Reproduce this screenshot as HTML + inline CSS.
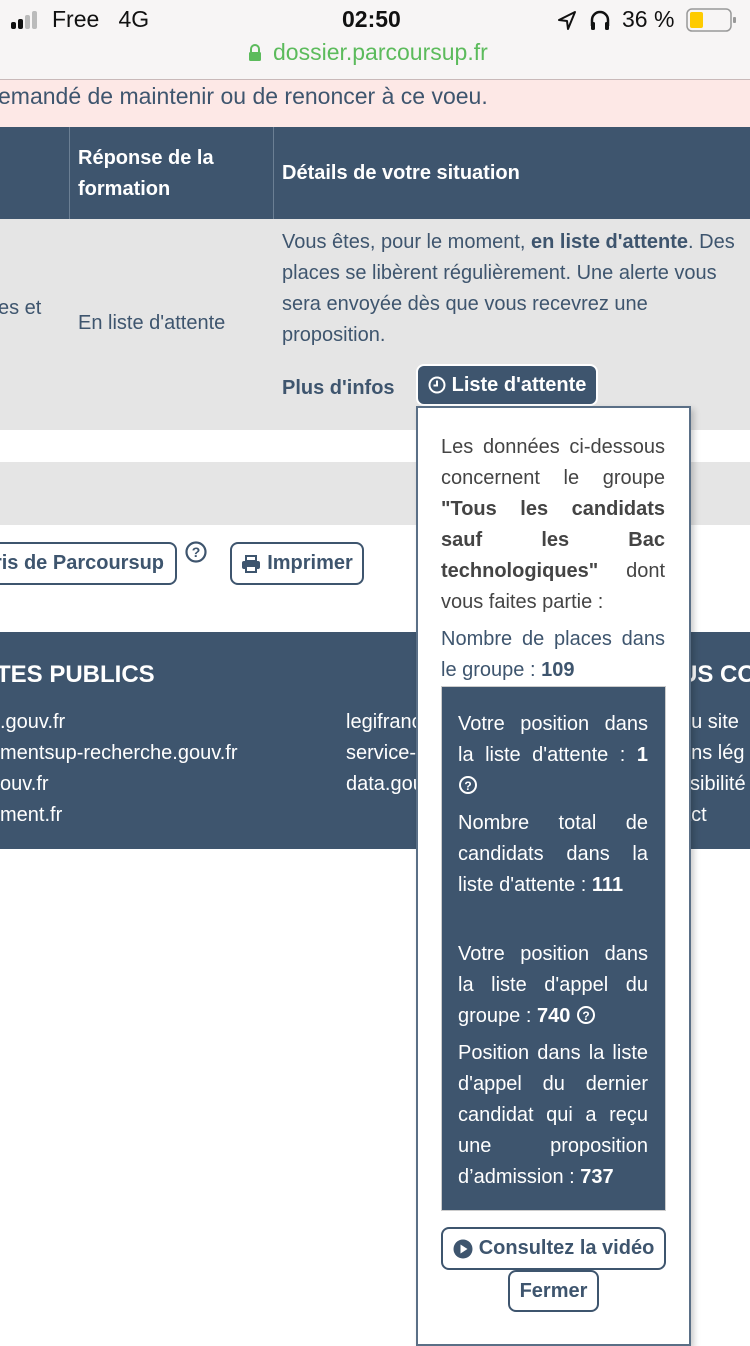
<!DOCTYPE html>
<html><head><meta charset="utf-8"><style>
*{margin:0;padding:0;box-sizing:border-box}
body{width:750px;height:1334px;overflow:hidden;position:relative;background:#fff;font-family:"Liberation Sans",sans-serif;font-size:20px;color:#3e556e}
.a{position:absolute;white-space:nowrap}
.b{font-weight:bold}
.btn{position:absolute;border:2px solid #3e556e;border-radius:8px;background:#fff;font-weight:bold;color:#3e556e;display:flex;align-items:center;justify-content:center;gap:6px}
.l{display:block;height:31px;line-height:31px;text-align:justify;text-align-last:justify;white-space:nowrap}
.e{text-align-last:left}
</style></head><body>
<div class="a" style="left:0;top:0;width:750px;height:80px;background:#f7f5f5;border-bottom:1px solid #c9b9b9"></div>
<svg class="a" style="left:11px;top:10px" width="36" height="20"><rect x="0" y="12" width="5" height="7" rx="2" fill="#111"/><rect x="7" y="9" width="5" height="10" rx="2" fill="#111"/><rect x="14" y="5" width="5" height="14" rx="2" fill="#bbb"/><rect x="21" y="1" width="5" height="18" rx="2" fill="#bbb"/></svg>
<div class="a" style="left:52px;top:6px;font-size:23px;color:#111">Free&nbsp;&nbsp;&nbsp;4G</div>
<div class="a b" style="left:342px;top:6px;font-size:23px;color:#111">02:50</div>
<svg class="a" style="left:556px;top:10px" width="22" height="22"><path d="M19 2 L3 10 L11 11 L12 19 Z" fill="none" stroke="#111" stroke-width="2" stroke-linejoin="round"/></svg>
<svg class="a" style="left:588px;top:8px" width="24" height="24"><path d="M4 18 V12 A8 8 0 0 1 20 12 V18" fill="none" stroke="#111" stroke-width="2.5"/><rect x="3" y="14" width="4" height="8" rx="1.5" fill="#111"/><rect x="17" y="14" width="4" height="8" rx="1.5" fill="#111"/></svg>
<div class="a" style="left:622px;top:6px;font-size:23px;color:#111">36 %</div>
<svg class="a" style="left:686px;top:8px" width="52" height="26"><rect x="1" y="1" width="44" height="22" rx="5" fill="none" stroke="#999" stroke-width="1.5"/><rect x="4" y="4" width="13" height="16" rx="2" fill="#fecb00"/><rect x="47" y="9" width="3" height="6" rx="1" fill="#999"/></svg>
<svg class="a" style="left:248px;top:44px" width="14" height="18"><path d="M3 8 V5 A4 4 0 0 1 11 5 V8" fill="none" stroke="#5cbb5c" stroke-width="2"/><rect x="1" y="8" width="12" height="9" rx="1.5" fill="#5cbb5c"/></svg>
<div class="a" style="left:273px;top:39px;font-size:23px;color:#5cbb5c">dossier.parcoursup.fr</div>
<div class="a" style="left:0;top:80px;width:750px;height:47px;background:#fde8e6"></div>
<div class="a" style="left:-2px;top:83px;font-size:23px;color:#3e556e">emandé de maintenir ou de renoncer à ce voeu.</div>
<div class="a" style="left:0;top:127px;width:750px;height:92px;background:#3e556e"></div>
<div class="a" style="left:69px;top:127px;width:1px;height:92px;background:#6b7f94"></div>
<div class="a" style="left:273px;top:127px;width:1px;height:92px;background:#6b7f94"></div>
<div class="a b" style="left:78px;top:143px;color:#fff;line-height:31px">Réponse de la<br>formation</div>
<div class="a b" style="left:282px;top:162px;color:#fff">Détails de votre situation</div>
<div class="a" style="left:0;top:219px;width:750px;height:211px;background:#e5e5e5"></div>
<div class="a" style="left:-2px;top:297px">es et</div>
<div class="a" style="left:78px;top:312px">En liste d'attente</div>
<div class="a" style="left:282px;top:227px;line-height:31px">Vous êtes, pour le moment, <b>en liste d'attente</b>. Des<br>places se libèrent régulièrement. Une alerte vous<br>sera envoyée dès que vous recevrez une<br>proposition.</div>
<div class="a b" style="left:282px;top:377px">Plus d'infos</div>
<div class="btn" style="left:416px;top:364px;width:182px;height:42px;background:#3e556e;color:#fff;border-color:#fff"><svg width="18" height="18"><circle cx="9" cy="9" r="7.5" fill="none" stroke="#fff" stroke-width="2"/><path d="M9 4.5 V9.5 H5.5" fill="none" stroke="#fff" stroke-width="2"/></svg>Liste d'attente</div>
<div class="a" style="left:0;top:462px;width:750px;height:63px;background:#e5e5e5"></div>
<div class="btn" style="left:-20px;top:542px;width:197px;height:43px;justify-content:flex-end;padding-right:11px">ris de Parcoursup</div>
<svg class="a" style="left:184px;top:540px" width="24" height="24"><circle cx="12" cy="12" r="9.5" fill="none" stroke="#3e556e" stroke-width="2.2"/><text x="12" y="17" text-anchor="middle" font-family="Liberation Sans" font-weight="bold" font-size="14" fill="#3e556e">?</text></svg>
<div class="btn" style="left:230px;top:542px;width:134px;height:43px"><svg width="20" height="18"><rect x="5" y="1" width="10" height="5" fill="none" stroke="#3e556e" stroke-width="2"/><rect x="1" y="6" width="18" height="8" rx="2" fill="#3e556e"/><rect x="5" y="11" width="10" height="6" fill="#fff" stroke="#3e556e" stroke-width="2"/></svg>Imprimer</div>
<div class="a" style="left:0;top:632px;width:750px;height:217px;background:#3e556e"></div>
<div class="a b" style="left:-4px;top:661px;font-size:24px;color:#fff">TES PUBLICS</div>
<div class="a" style="left:0;top:707px;color:#fff;line-height:31px">.gouv.fr<br>mentsup-recherche.gouv.fr<br>ouv.fr<br>ment.fr</div>
<div class="a" style="left:346px;top:707px;color:#fff;line-height:31px">legifrance.gouv.fr<br>service-public.fr<br>data.gouv.fr</div>
<div class="a b" style="left:680px;top:661px;font-size:24px;color:#fff">US CO</div>
<div class="a" style="left:680px;top:707px;color:#fff;line-height:31px">du site<br>ons lég<br>ssibilité<br>act</div>
<div class="a" style="left:416px;top:406px;width:275px;height:940px;background:#fff;border:2px solid #5a6f86;box-shadow:3px 3px 6px rgba(0,0,0,.2)"></div>
<div class="a" style="left:441px;top:432px;width:224px;color:#444">
<span class="l">Les données ci-dessous</span>
<span class="l">concernent le groupe</span>
<span class="l b">"Tous les candidats</span>
<span class="l b">sauf les Bac</span>
<span class="l"><b>technologiques"</b> dont</span>
<span class="l e">vous faites partie :</span>
<div style="height:6px"></div>
<span class="l" style="color:#3e556e">Nombre de places dans</span>
<span class="l e" style="color:#3e556e">le groupe : <b>109</b></span>
</div>
<div class="a" style="left:441px;top:686px;width:225px;height:525px;background:#3e556e;border:1px solid #ccc"></div>
<div class="a" style="left:458px;top:709px;width:190px;color:#fff">
<span class="l">Votre position dans</span>
<span class="l">la liste d'attente : <b>1</b></span>
<span class="l e"><svg width="20" height="20" style="vertical-align:-3px"><circle cx="10" cy="10" r="8" fill="none" stroke="#fff" stroke-width="2"/><text x="10" y="15" text-anchor="middle" font-family="Liberation Sans" font-weight="bold" font-size="12" fill="#fff">?</text></svg></span>
<div style="height:6px"></div>
<span class="l">Nombre total de</span>
<span class="l">candidats dans la</span>
<span class="l e">liste d'attente : <b>111</b></span>
<div style="height:38px"></div>
<span class="l">Votre position dans</span>
<span class="l">la liste d'appel du</span>
<span class="l e">groupe : <b>740</b> <svg width="20" height="20" style="vertical-align:-3px"><circle cx="10" cy="10" r="8" fill="none" stroke="#fff" stroke-width="2"/><text x="10" y="15" text-anchor="middle" font-family="Liberation Sans" font-weight="bold" font-size="12" fill="#fff">?</text></svg></span>
<div style="height:6px"></div>
<span class="l">Position dans la liste</span>
<span class="l">d'appel du dernier</span>
<span class="l">candidat qui a reçu</span>
<span class="l">une proposition</span>
<span class="l e">d’admission : <b>737</b></span>
</div>
<div class="btn" style="left:441px;top:1227px;width:225px;height:43px"><svg width="20" height="20"><circle cx="10" cy="10" r="9.5" fill="#3e556e"/><path d="M7.5 5.5 L14.5 10 L7.5 14.5 Z" fill="#fff"/></svg>Consultez la vidéo</div>
<div class="btn" style="left:508px;top:1270px;width:91px;height:42px">Fermer</div>
</body></html>
